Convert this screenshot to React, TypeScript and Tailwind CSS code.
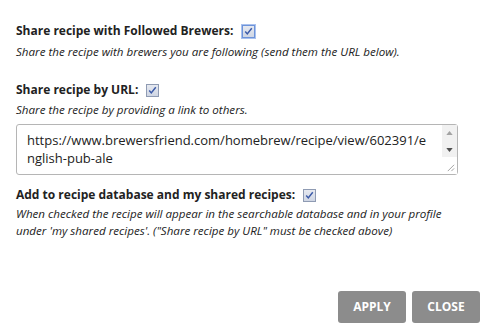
import { useState } from 'react'

function Check({ focused }: { focused?: boolean }) {
  return (
    <span
      className={`inline-flex w-[13px] h-[13px] items-center justify-center border bg-gradient-to-b from-[#e6e9f0] to-[#cfd6e4] ${
        focused ? 'border-[#6d93d9] outline outline-1 outline-[#a9c1ee]' : 'border-[#8f9bb3]'
      }`}
    >
      <svg viewBox="0 0 11 11" className="w-[9px] h-[9px]">
        <path d="M1.5 5.5 L4 8.5 L9.5 1.5" fill="none" stroke="#3b5aa8" strokeWidth="1.8" />
      </svg>
    </span>
  )
}

function FakeScrollbar() {
  return (
    <div className="absolute right-[1px] top-[1px] bottom-[1px] w-[15px] flex flex-col bg-[#f1f1f1]">
      <div className="h-[15px] flex items-center justify-center">
        <svg viewBox="0 0 8 5" className="w-[7px] h-[4px]">
          <path d="M0 5 L4 0 L8 5 Z" fill="#a3a3a3" />
        </svg>
      </div>
      <div className="flex-1" />
      <div className="h-[15px] flex items-center justify-center">
        <svg viewBox="0 0 8 5" className="w-[7px] h-[4px]">
          <path d="M0 0 L4 5 L8 0 Z" fill="#505050" />
        </svg>
      </div>
      <div className="h-[17px] bg-white" />
    </div>
  )
}

export default function App() {
  const [url, setUrl] = useState(
    'https://www.brewersfriend.com/homebrew/recipe/view/602391/english-pub-ale'
  )

  return (
    <div className="w-[494px] h-[330px] bg-white font-['Open_Sans',sans-serif] text-[#222] flex flex-col px-4">
      <div className="mt-[21px] flex items-center gap-[9px] h-5">
        <span className="text-[12px] font-bold">Share recipe with Followed Brewers:</span>
        <Check focused />
      </div>
      <p className="mt-[2px] text-[11.6px] italic leading-[17px]">
        Share the recipe with brewers you are following (send them the URL below).
      </p>

      <div className="mt-[20px] flex items-center gap-[8px] h-5">
        <span className="text-[12px] font-bold">Share recipe by URL:</span>
        <Check />
      </div>
      <p className="mt-[1px] text-[11.6px] italic leading-[17px]">
        Share the recipe by providing a link to others.
      </p>
      <div className="relative mt-[6px] w-[442px] h-[51px]">
        <textarea
          value={url}
          onChange={e => setUrl(e.target.value)}
          className="block w-full h-full border border-[#b5b5b5] rounded-[3px] pl-[10px] pr-[29px] pt-[6px] text-[13px] leading-[18px] text-[#222] overflow-hidden outline-none resize-none"
        />
        <FakeScrollbar />
        <svg viewBox="0 0 10 10" className="absolute right-[3px] bottom-[3px] w-[9px] h-[9px]">
          <path d="M9 2 L2 9 M9 6 L6 9" stroke="#9a9a9a" strokeWidth="1" />
        </svg>
      </div>

      <div className="mt-[10px] flex items-center gap-[8px] h-5">
        <span className="text-[12px] font-bold">Add to recipe database and my shared recipes:</span>
        <Check />
      </div>
      <p className="text-[11.6px] italic leading-[17px]">
        When checked the recipe will appear in the searchable database and in your profile
        <br />
        under 'my shared recipes'. ("Share recipe by URL" must be checked above)
      </p>

      <div className="mt-auto mb-[7px] mr-[-2px] flex justify-end gap-[6px]">
        <button className="w-[68px] h-[32px] bg-[#8c8c8c] rounded-[3px] text-white text-[12px] font-bold">
          APPLY
        </button>
        <button className="w-[68px] h-[32px] bg-[#8c8c8c] rounded-[3px] text-white text-[12px] font-bold">
          CLOSE
        </button>
      </div>
    </div>
  )
}
